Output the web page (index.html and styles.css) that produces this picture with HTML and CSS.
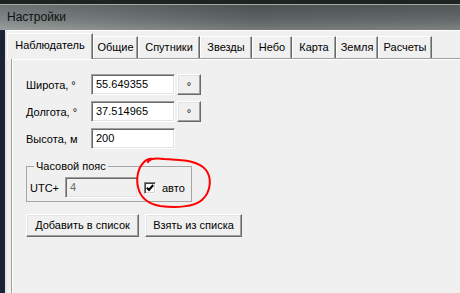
FILE: index.html
```html
<!DOCTYPE html>
<html lang="ru">
<head>
    <meta charset="UTF-8">
    <title>Настройки</title>
    <link rel="stylesheet" href="styles.css">
</head>
<body>
    <div class="desktop-strip"></div>
    <div class="titlebar">Настройки</div>
    <div class="window-row">
        <div class="frame-left"></div>
        <div class="client">
            <div class="tabs">
                <div class="tab active" style="width: 86px">Наблюдатель</div>
                <div class="tab" style="width: 45px">Общие</div>
                <div class="tab" style="width: 62px">Спутники</div>
                <div class="tab" style="width: 52px">Звезды</div>
                <div class="tab" style="width: 40px">Небо</div>
                <div class="tab" style="width: 44px">Карта</div>
                <div class="tab" style="width: 42px">Земля</div>
                <div class="tab" style="width: 54px">Расчеты</div>
            </div>
            <div class="panel">
                <div class="row">
                    <span class="label">Широта, °</span>
                    <div class="field">55.649355</div>
                    <div class="btn btn-deg">°</div>
                </div>
                <div class="row">
                    <span class="label">Долгота, °</span>
                    <div class="field">37.514965</div>
                    <div class="btn btn-deg">°</div>
                </div>
                <div class="row">
                    <span class="label">Высота, м</span>
                    <div class="field">200</div>
                </div>

                <fieldset class="group">
                    <legend>Часовой пояс</legend>
                    <div class="group-row">
                        <span class="utc">UTC+</span>
                        <div class="field field-disabled">4</div>
                        <span class="checkbox">
                            <svg width="8" height="8" viewBox="0 0 8 8"><path d="M0.8 3.6 L3 6 L7.2 1" fill="none" stroke="#000" stroke-width="2"/></svg>
                        </span>
                        <span class="check-label">авто</span>
                    </div>
                </fieldset>

                <div class="buttons">
                    <div class="btn btn-add">Добавить в список</div>
                    <div class="btn btn-take">Взять из списка</div>
                </div>

                <!-- hand drawn red mark around the checkbox -->
                <svg class="scribble" width="78" height="54" viewBox="0 0 78 54">
                    <path d="M12 6 C14 2, 20 2, 28 3 C45 4, 62 4, 70 14 C76 22, 75 36, 66 44 C58 51, 40 52, 24 50 C12 48, 4 41, 2 31 C0 22, 2 12, 8 6 C10 4, 13 2, 17 3"
                          fill="none" stroke="#f00" stroke-width="2" stroke-linecap="round"/>
                </svg>
            </div>
        </div>
    </div>
</body>
</html>
```

FILE: styles.css
```css
body {
    margin: 0;
    width: 460px;
    height: 293px;
    overflow: hidden;
    font-family: "Liberation Sans", Arial, sans-serif;
    font-size: 11px;
    color: #000;
    background: #1b2336;
}
.desktop-strip {
    height: 4px;
    background: #1d2321;
}
.titlebar {
    box-sizing: border-box;
    height: 26px;
    border-top: 1px solid #a3a9a8;
    padding: 5px 0 0 7px;
    font-size: 12px;
    line-height: 14px;
    color: #0e1111;
    background:
        linear-gradient(to right, rgba(255, 255, 255, 0.1), rgba(0, 0, 0, 0.18) 55%, rgba(0, 0, 0, 0.12)),
        linear-gradient(#5c6362, #737a79 60%, #8f9594);
}
.window-row {
    display: flex;
    height: 263px;
}
.frame-left {
    width: 5px;
    background: #1b2336;
}
.client {
    flex: 1;
    border-left: 2px solid #e4e4e4;
    border-top: 1px solid #fff;
    background: #f0f0f0;
    padding-top: 2px;
}

/* Tabs */
.tabs {
    display: flex;
    align-items: flex-end;
    height: 25px;
}
.tab {
    box-sizing: border-box;
    height: 22px;
    padding-top: 3px;
    line-height: 14px;
    text-align: center;
    border-top: 1px solid #fff;
    border-left: 1px solid #fff;
    border-right: 1px solid #696969;
    box-shadow: inset -1px 0 #a0a0a0;
    white-space: nowrap;
}
.tab.active {
    position: relative;
    z-index: 1;
    height: 26px;
    margin-bottom: -1px;
    padding-top: 4px;
    background: #f0f0f0;
}

/* Panel */
.panel {
    position: relative;
    margin-left: 4px;
    height: 230px;
    border-top: 1px solid #a0a0a0;
    border-left: 1px solid #a0a0a0;
    box-shadow: inset 1px 1px #fff;
    padding: 15px 0 0 14px;
}
.row {
    display: flex;
    align-items: center;
    height: 21px;
    margin-bottom: 6px;
}
.label {
    width: 65px;
}
.field {
    box-sizing: border-box;
    width: 84px;
    height: 21px;
    padding: 0 4px;
    line-height: 19px;
    background: #fff;
    border: 1px solid;
    border-color: #a0a0a0 #fff #fff #a0a0a0;
    box-shadow: inset 1px 1px #696969, inset -1px -1px #e3e3e3;
}
.field-disabled {
    width: 73px;
    background: #f0f0f0;
    color: #6d6d6d;
}
.btn {
    box-sizing: border-box;
    text-align: center;
    background: #f0f0f0;
    border: 1px solid;
    border-color: #fff #696969 #696969 #fff;
    box-shadow: inset -1px -1px #a0a0a0, inset 1px 1px #e3e3e3;
}
.btn-deg {
    width: 24px;
    height: 21px;
    margin-left: 2px;
    padding-top: 4px;
    line-height: 15px;
}

/* Time zone group */
.group {
    box-sizing: border-box;
    width: 166px;
    margin: 11px 0 0;
    padding: 4px 3px 3px;
    border: 1px solid #a5a5a5;
}
.group legend {
    padding: 0 2px;
    margin-left: 4px;
    line-height: 13px;
}
.group-row {
    display: flex;
    align-items: center;
}
.utc {
    width: 35px;
}
.checkbox {
    box-sizing: border-box;
    display: flex;
    align-items: center;
    justify-content: center;
    width: 12px;
    height: 12px;
    margin-left: 6px;
    background: #fff;
    border: 1px solid;
    border-color: #808080 #fff #fff #808080;
    box-shadow: inset 1px 1px #404040, inset -1px -1px #d4d0c8;
}
.check-label {
    margin-left: 6px;
}

/* Buttons */
.buttons {
    display: flex;
    gap: 6px;
    margin-top: 12px;
}
.buttons .btn {
    height: 23px;
    line-height: 21px;
}
.btn-add {
    width: 113px;
}
.btn-take {
    width: 97px;
}

.scribble {
    position: absolute;
    left: 124px;
    top: 97px;
}
```
